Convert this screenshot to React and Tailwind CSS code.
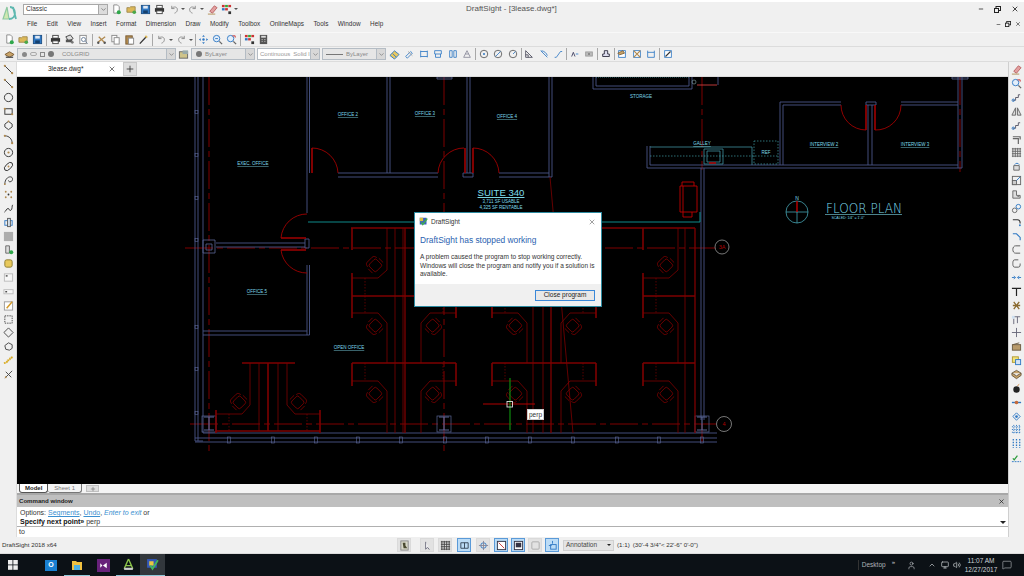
import { Minus, X, Plus, ChevronDown, ChevronUp, User, Monitor, Volume2, MessageSquare } from "lucide-react"

const LIB = "font-['Liberation_Sans',Arial,sans-serif]"

// small toolbar drawings, all on a 12x12 grid
const B = "#2f78c4", D = "#444", T = "#b08a50", Y = "#dcb858", G = "#8a8a8a"
const ICONS = {
  new: <><path d="M3 1h4l2 2v7H3z" fill="#fff" stroke={G} /><circle cx="8.5" cy="9" r="2.2" fill="#2fa84a" /></>,
  open: <><path d="M1 4h3l1-1h5v6H1z" fill={Y} stroke="#a08a50" /><circle cx="9" cy="9" r="2" fill="#4aa84a" /></>,
  save: <><rect x="1.5" y="1.5" width="9" height="9" fill={B} stroke="#1d4f85" /><rect x="3.5" y="2" width="5" height="3" fill="#dfe9f5" /><rect x="3.5" y="7" width="5" height="3" fill="#16406e" /></>,
  print: <><rect x="3" y="1.5" width="6" height="3" fill="#fff" stroke={D} /><rect x="1" y="4.5" width="10" height="4" fill="#333" /><rect x="3" y="7.5" width="6" height="3" fill="#fff" stroke={D} /></>,
  print2: <><path d="M2 3l5-2 3 4-5 3z" fill="#ddd" stroke={D} /><path d="M2 6h7v3H2z" fill="#555" /><circle cx="9" cy="9" r="1.5" fill="#777" /></>,
  preview: <><rect x="2" y="1.5" width="7" height="9" fill="#fff" stroke={G} /><circle cx="6" cy="6" r="2.2" fill="none" stroke="#6a7f9a" /><path d="M8 8l2.5 2.5" stroke="#6a7f9a" /></>,
  undo: <path d="M3 2v3h3M3 5c2-3 7-2 6 2-.3 1.5-1.5 2.5-3 3" fill="none" stroke={G} />,
  redo: <path d="M9 2v3H6M9 5C7 2 2 3 3 7c.3 1.5 1.5 2.5 3 3" fill="none" stroke={G} />,
  cut: <><path d="M2 9l8-6M3 3l6 6" stroke={T} strokeWidth="1.4" /><circle cx="2.5" cy="9.5" r="1.3" fill="#555" /><circle cx="9.5" cy="9.5" r="1.3" fill="#555" /></>,
  copy: <><rect x="2" y="1.5" width="5.5" height="7" fill="#fff" stroke={G} /><rect x="4.5" y="4" width="5.5" height="7" fill="#fff" stroke={G} /></>,
  paste: <><rect x="2" y="2" width="7" height="9" fill={T} stroke="#7a5a30" /><rect x="5" y="4.5" width="5.5" height="6.5" fill="#fff" stroke={G} /></>,
  match: <><path d="M2 10.5L9 3" stroke="#333" strokeWidth="1.4" /><path d="M8 2l2 2" stroke={Y} strokeWidth="2" /></>,
  pan: <><circle cx="6" cy="6" r="1.3" fill={B} /><path d="M6 1l1.5 2h-3zM6 11l1.5-2h-3zM1 6l2-1.5v3zM11 6L9 4.5v3z" fill={B} /></>,
  zoomA: <><circle cx="5" cy="5" r="3.5" fill="#e3eefa" stroke={B} /><path d="M8 8l3 3" stroke="#666" strokeWidth="1.4" /><path d="M3.5 5h3" stroke={B} /></>,
  zoomB: <><circle cx="5" cy="5" r="3.5" fill="#e3eefa" stroke={B} /><path d="M8 8l3 3" stroke="#666" strokeWidth="1.4" /><path d="M7 2h3v2" fill="none" stroke="#c33" /></>,
  layers: <><rect x="1" y="1" width="3" height="2.5" fill="#c33" /><rect x="4.5" y="1" width="3" height="2.5" fill="#3a3" /><rect x="8" y="1" width="3" height="2.5" fill="#c33" /><rect x="1" y="4.5" width="3" height="2.5" fill={B} /><rect x="4.5" y="4.5" width="3" height="2.5" fill="#c33" /><rect x="8" y="8" width="3" height="3" fill="#333" /></>,
  calc: <><rect x="2" y="1" width="8" height="10" fill="#555" /><rect x="3.5" y="2" width="5" height="2" fill="#ddd" /><path d="M4 6h1M7 6h1M4 8h1M7 8h1" stroke="#ddd" /></>,
  eraser: <><path d="M3 8l5-6 3 2-5 6z" fill="#e2a0a0" stroke="#b66" /><path d="M1 11h8" stroke="#b08a50" /></>,
  stack: <><path d="M1 6l5-3 5 3-5 3z" fill="#c9a46a" stroke="#7a5a30" /><path d="M2 9h8" stroke="#555" strokeWidth="1.5" /></>,
  folderL: <><rect x="1.5" y="3" width="9" height="7" fill="#cfc48a" stroke="#666" /><rect x="5" y="1.5" width="6" height="4" fill="#9aa" /></>,
  ruler: <><path d="M1 7l5-5 5 4-5 5z" fill="#e8c860" stroke={B} /><path d="M4 5l4 4" stroke={B} /></>,
  aligned: <><path d="M2 9l6-6 2 2-6 6z" fill="none" stroke={B} /><path d="M5 3l5 5" stroke="#999" /></>,
  dimH: <path d="M2 2v8M10 2v8M2 9h8M2 3h8" fill="none" stroke={B} />,
  dimB: <><path d="M2 2h8v4H2zM3 6v4h6V6" fill="none" stroke={B} /></>,
  dimV: <><path d="M2 2h3v8H2zM7 2h3v8H7z" fill="none" stroke={B} /></>,
  dimA: <path d="M2 10L6 2l4 8zM4 6h4" fill="none" stroke="#889" />,
  center: <><circle cx="6" cy="6" r="4.5" fill="none" stroke="#555" /><circle cx="6" cy="6" r="1.2" fill={B} /></>,
  dia: <><circle cx="6" cy="6" r="4.5" fill="none" stroke="#555" /><path d="M3 9l6-6" stroke={B} /></>,
  rad: <><circle cx="6" cy="6" r="4.5" fill="none" stroke="#555" /><path d="M6 6l3-3" stroke={B} /></>,
  corner: <path d="M2 2v8h8zM2 7h3v3" fill="none" stroke="#445" />,
  curve: <path d="M2 2l8 8M3 2c4 1 6 3 7 6" fill="none" stroke={B} />,
  leader: <path d="M2 10h2l5-7h2" fill="none" stroke={B} />,
  text: <><path d="M2 9l2-5 2 5" fill="none" stroke="#335" /><path d="M7 6h3" stroke={B} /></>,
  grayRect: <><rect x="2" y="3.5" width="8" height="5" fill="#bbb" stroke="#999" /><rect x="5" y="5" width="2" height="2" fill="#777" /></>,
  stamp: <><path d="M4 2h4v4h2v3H2V6h2z" fill="#dde" stroke="#223" /></>,
  tanbox: <><rect x="2" y="2" width="8" height="8" fill="#fff" stroke={B} /><path d="M1 5l6-3 2 3-6 2z" fill="#c9a46a" stroke="#7a5a30" /></>,
  tanx: <><rect x="2" y="2" width="8" height="8" fill="#fff" stroke={B} /><path d="M2 2l8 8M10 2l-8 8" stroke="#b08a50" strokeWidth="1.5" /></>,
  boxB: <path d="M2 2v8h8V2M2 4h8" fill="none" stroke={B} />,
  pencil: <><rect x="2" y="2" width="8" height="8" fill="#fff" stroke={B} /><path d="M3 9l6-6" stroke="#333" strokeWidth="1.3" /></>,
  seg: <><path d="M2 2l8 8" stroke="#333" /><circle cx="2" cy="2" r="1.2" fill={T} /><circle cx="10" cy="10" r="1.2" fill={T} /></>,
  circle: <circle cx="6" cy="6" r="4.5" fill="none" stroke="#333" />,
  rect: <><rect x="2" y="3" width="8" height="6" fill="none" stroke="#333" /><circle cx="2" cy="3" r="1.2" fill={T} /><circle cx="10" cy="9" r="1.2" fill={T} /></>,
  poly: <><path d="M6 1.5l4 3v3l-4 3-4-3v-3z" fill="none" stroke="#333" /><circle cx="6" cy="1.5" r="1" fill={T} /></>,
  arc: <><path d="M2 2c5 0 8 4 8 8" fill="none" stroke="#333" /><circle cx="2" cy="2" r="1.2" fill={T} /><circle cx="10" cy="10" r="1.2" fill={T} /></>,
  circleDot: <><circle cx="6" cy="6" r="4.5" fill="none" stroke="#333" /><circle cx="6" cy="6" r="1.2" fill={T} /></>,
  ellipse: <><ellipse cx="6" cy="6" rx="5.5" ry="3" transform="rotate(-45 6 6)" fill="none" stroke="#333" /><circle cx="6" cy="6" r="1" fill={T} /></>,
  ellArc: <><path d="M2 10c0-5 3-8 6-8s3 4 1 5-3 0-3-1" fill="none" stroke="#333" /><circle cx="2" cy="10" r="1" fill={T} /></>,
  dots: <><circle cx="3" cy="3" r="1" fill={T} /><circle cx="9" cy="3" r="1" fill={T} /><circle cx="6" cy="6" r="1" fill="#333" /><circle cx="3" cy="9" r="1" fill={T} /><circle cx="9" cy="9" r="1" fill={T} /></>,
  spline: <path d="M1.5 10c2-1 2-4 4-4s1 3 3 2 1-5 2-6" fill="none" stroke="#333" />,
  block: <><rect x="2" y="4" width="8" height="5" fill="none" stroke={B} /><rect x="5" y="1.5" width="3" height="9" fill="#d8e4f0" stroke="#555" /></>,
  hatch: <rect x="1" y="1" width="10" height="10" fill="#adadad" />,
  table: <><path d="M3 2h4v8H3z" fill="#ddd" stroke="#666" /><circle cx="9" cy="9" r="2.2" fill="#2fa84a" /></>,
  region: <rect x="2" y="2" width="8" height="8" rx="2" fill="#e8c95c" stroke="#8a7a30" />,
  note: <><rect x="1.5" y="2" width="9" height="8" fill="#f7f7f7" stroke="#bbb" /><rect x="3" y="3.5" width="2" height="1.5" fill="#444" /></>,
  noteS: <><rect x="1" y="4" width="10" height="4.5" fill="#f7f7f7" stroke="#bbb" /><rect x="2.5" y="5.5" width="2" height="1.5" fill="#444" /></>,
  edit: <><rect x="1.5" y="2" width="9" height="9" fill="#fff" stroke="#999" /><path d="M4 9l6-7" stroke="#d49a2a" strokeWidth="1.6" /></>,
  dashRect: <rect x="2" y="2" width="8" height="8" fill="none" stroke="#444" strokeDasharray="1.5 1" />,
  hex: <path d="M6 1l5 5-5 5-5-5z" fill="none" stroke="#444" />,
  cloud: <path d="M2 5l4-3 4 2v4l-3 2-4-1z" fill="none" stroke="#444" />,
  flash: <path d="M1 9l3-1 1-2 2-.5 1-2L11 2" fill="none" stroke="#d8aa20" strokeWidth="2" strokeDasharray="2 .6" />,
  trim: <><path d="M2 10l8-8M3 3l6 6" stroke="#444" /><circle cx="3" cy="9" r="1" fill={T} /></>,
  moveR: <><path d="M2 9h3V6h3V3h2" fill="none" stroke="#556" /><circle cx="2.5" cy="9" r="1.3" fill="none" stroke={B} /></>,
  mirror: <path d="M5 2v8H1zM7 2v8h4z" fill="#ddd" stroke="#666" />,
  offset: <path d="M2 3h8v3M2 5h6v6" fill="none" stroke="#666" strokeWidth="1.3" />,
  array: <><path d="M1 2h10M1 4.7h10M1 7.3h10M1 10h10M2 1v10M4.7 1v10M7.3 1v10M10 1v10" stroke="#666" /></>,
  rotate: <><path d="M3 5h6v5H3z" fill="#ddd" stroke="#666" /><path d="M4 4c1-2 4-2 5 0" fill="none" stroke={B} /></>,
  scale: <><rect x="1.5" y="1.5" width="9" height="9" fill="none" stroke="#666" /><rect x="1.5" y="6" width="4.5" height="4.5" fill="#ccc" stroke="#666" /><path d="M6 6l4-4" stroke={B} /></>,
  stretch: <path d="M2 2h4v5h4v3H2zM7 8h2" fill="#ddd" stroke="#666" />,
  cluster: <><circle cx="4" cy="8" r="2.5" fill="none" stroke="#666" /><circle cx="8" cy="4" r="2.5" fill="none" stroke={B} /></>,
  fillet: <><path d="M2 3h5c2 0 3 2 3 4" fill="none" stroke="#333" strokeWidth="1.2" /><circle cx="9.7" cy="9" r="1" fill={B} /></>,
  chamfer: <><path d="M2 3h4l4 4v3" fill="none" stroke={B} strokeWidth="1.2" /></>,
  capL: <path d="M10 2H5C3 2 2 4 2 6s1 4 3 4h5" fill="none" stroke="#555" />,
  capR: <path d="M8 2H4C2 2 2 5 2 6s0 4 2 4h4c2 0 2-2 2-4" fill="none" stroke="#555" />,
  join: <path d="M1 6h3M8 6h3M3 4.5L5 6 3 7.5M9 4.5L7 6l2 1.5" fill="none" stroke={B} />,
  tee: <path d="M1 2.5h10M6 2.5V11" stroke="#222" strokeWidth="1.3" />,
  explode: <path d="M3 2l6 8M9 2l-6 8M2 6h8" stroke="#8a6a30" strokeWidth="1.4" />,
  indent: <><path d="M3 3h7M7 3v7M3 5v6" stroke="#667" /><path d="M1 2h3v3H1z" fill="#cfe0f0" /></>,
  cross: <path d="M6 1v10M1 6h10" stroke="#667" />,
  crate: <><rect x="1.5" y="4" width="9" height="6" fill="#b89a6a" stroke="#6a5a40" /><path d="M2 4l7-2" stroke="#6a5a40" /></>,
  sheet: <><rect x="1.5" y="2" width="6.5" height="6" fill="#f2e27a" stroke="#b09a30" /><rect x="5" y="5" width="5.5" height="5.5" fill="#d4e4f5" stroke={B} /></>,
  box3: <path d="M6 1.5l5 3-5 3-5-3zM1 4.5V7l5 3.5L11 7V4.5" fill="#c9a46a" stroke="#6a5a40" />,
  bomb: <><circle cx="6" cy="7" r="3.5" fill="#222" /><path d="M7 3l2-1.5" stroke="#d08030" /></>,
  star: <><path d="M1 6h10" stroke={B} strokeWidth="1.5" /><circle cx="6" cy="6" r="2" fill="#c66a3a" /></>,
  net: <><path d="M6 2l4 4-4 4-4-4z" fill="none" stroke={B} /><circle cx="6" cy="6" r="1.5" fill={B} /></>,
  grid2: <path d="M3 1v10M6 1v10M9 1v10M1 3h10M1 6h10M1 9h10" stroke={B} strokeDasharray="1.3 1.3" />,
  grid3: <path d="M2.5 1v10M6 1v10M9.5 1v10" stroke={B} strokeWidth="1.4" strokeDasharray="1.7 1.3" />,
  checks: <><path d="M2 7l1.5 1.5L7 4" fill="none" stroke="#2a9a3a" strokeWidth="1.3" /><path d="M1 10.5h10" stroke={B} strokeDasharray="2 1" /></>,
  bulb: <><rect x="2" y="1" width="8" height="10" fill="#d8d8c8" stroke="#888" /><path d="M4 3h3v3l2 3H5z" fill="#4a4a30" /></>,
  cursor: <path d="M4 2v8l2-2 2 2.5" fill="#fff" stroke="#667" />,
  gridS: <path d="M2 1v10M4.7 1v10M7.3 1v10M10 1v10M1 2h10M1 4.7h10M1 7.3h10M1 10h10" stroke="#444" />,
  orth: <><path d="M2 3h8v6H2z" fill="none" stroke="#345" /><path d="M6 3v6" stroke="#345" /></>,
  snap: <><circle cx="6" cy="6" r="3" fill="none" stroke={B} /><path d="M6 1v10M1 6h10" stroke="#889" /></>,
  polar: <><rect x="1.5" y="1.5" width="9" height="9" fill="#fff" stroke="#334" /><path d="M3 3l6 6" stroke="#c33" /></>,
  lw: <><rect x="1.5" y="1.5" width="9" height="9" fill="#fff" stroke="#334" /><rect x="3" y="3" width="6" height="5" fill="#334" /></>,
  blank: <rect x="2" y="2" width="8" height="8" rx="1" fill="none" stroke="#aaa" />,
  dyn: <><path d="M6 1v3M2 6h3" stroke={B} /><rect x="4" y="5" width="6" height="5" fill="none" stroke={B} /></>,
}

function Tool({ k, w = "w-[14px]", s = 11 }) {
  return (
    <div className={"flex items-center justify-center shrink-0 " + w}>
      <svg width={s} height={s} viewBox="0 0 12 12">{ICONS[k]}</svg>
    </div>
  )
}

function Arrow({ w = "w-[6px]" }) {
  return <div className={"flex justify-center shrink-0 " + w}><div className="border-x-[2px] border-t-[2px] border-x-transparent border-t-[#555]" /></div>
}

function Sep({ w = "w-[4px]" }) {
  return <div className={"flex justify-center shrink-0 " + w}><div className="w-px h-[12px] bg-[#a8a8a8]" /></div>
}

function Combo({ w, children, dim }) {
  return (
    <div className={"flex items-center h-[12px] shrink-0 border border-[#b4bcc4] " + w + " " + (dim ? "bg-[#e6e6e6]" : "bg-white")}>
      <div className="flex-1 flex items-center min-w-0 px-[2px] gap-[3px] text-[6px] text-[#666] whitespace-nowrap">{children}</div>
      <div className="w-[9px] h-full flex items-center justify-center bg-[#d8d8d8] border-l border-[#b4bcc4]">
        <ChevronDown size={7} strokeWidth={2} color="#666" />
      </div>
    </div>
  )
}

const MENUS = ["File", "Edit", "View", "Insert", "Format", "Dimension", "Draw", "Modify", "Toolbox", "OnlineMaps", "Tools", "Window", "Help"]
const LEFT_TOOLS = ["seg", "seg", "circle", "rect", "poly", "arc", "circleDot", "ellipse", "ellArc", "dots", "spline", "block", "hatch", "table", "region", "note", "noteS", "edit", "dashRect", "hex", "cloud", "flash", "trim"]
const RIGHT_TOOLS = ["zoomB", "moveR", "mirror", "moveR", "offset", "array", "rotate", "scale", "stretch", "cluster", "fillet", "chamfer", "capL", "capR", "join", "tee", "explode", "indent", "cross", "crate", "sheet", "box3", "bomb", "star", "net", "grid2", "grid3", "checks"]
const DIM_TOOLS = ["aligned", "dimH", "dimB", "dimV", "dimA", "|", "center", "dia", "rad", "|", "corner", "curve", "leader", "|", "text", "grayRect", "|", "stamp", "|", "tanbox", "tanx", "boxB", "|", "pencil"]

const RED = "#7d0000"

function Chair({ x, y, r }) {
  return (
    <g transform={`translate(${x} ${y}) rotate(${r})`} fill="none" stroke={RED} strokeWidth=".8">
      <rect x="-4.5" y="-5" width="10" height="10" rx="2" />
      <path d="M-4 -6.5c-2 .5-3.500 1-3.500 3v7c0 2 1.500 2.500 3.500 3" />
      <path d="M-2 -7.500h6M-2 7.500h6" />
    </g>
  )
}

// one line of cubicles, running right (dir 1) or left (dir -1) from the thick panel
function Cubes({ x, dir }) {
  const X = v => x + dir * v
  const thin = `M${X(35)} 228V270L${X(26)} 278H${x}M${x} 313H${X(26)}L${X(35)} 323V363M${x} 381H${X(26)}L${X(35)} 391V433`
  const thick = `M${x} 228V250M${x} 273V318M${x} 363V386`
  const dash = `M${X(13)} 278V296M${X(13)} 296V313M${X(13)} 363V381`
  const up = dir === 1 ? 45 : 135
  const down = dir === 1 ? -45 : -135
  return (
    <g>
      <path d={thin} fill="none" stroke={RED} strokeWidth=".8" />
      <path d={thick} fill="none" stroke={RED} strokeWidth="1.6" />
      <path d={dash} fill="none" stroke={RED} strokeWidth=".7" strokeDasharray="1.500 1.500" />
      <Chair x={X(23)} y={265} r={up} />
      <Chair x={X(23)} y={326} r={down} />
      <Chair x={X(23)} y={394} r={down} />
    </g>
  )
}

function IBeam({ x, y }) {
  return (
    <g fill="none" stroke="#5a6696">
      <path d={`M${x - 5} ${y - 7}h10M${x - 5} ${y + 6}h10M${x} ${y - 7}v13`} strokeWidth="1.2" />
      <rect x={x - 7} y={y - 8} width="14" height="16" strokeWidth=".7" />
    </g>
  )
}

function Label({ x, y, children, size = 4.5, under = true }) {
  return (
    <text x={x} y={y} textAnchor="middle" fontSize={size} fill="#7fdcec" className={LIB + (under ? " underline" : "")}>{children}</text>
  )
}

function Plan() {
  const ticksX = [229, 273, 316, 358, 401, 445, 487, 530, 573, 617, 659, 702]
  const ticksY = [112, 155, 198, 240, 327, 369, 413]
  return (
    <svg width="991" height="407" viewBox="17 77 991 407" className="block">
      {/* center lines */}
      <path d="M209 77V453M444 77V453M185 248H716M190 424H716M702 77V170M702 424V442M960 77V172" fill="none" stroke="#8c0000" strokeWidth=".9" strokeDasharray="28 4 6 4" />

      {/* walls */}
      <path d="M195 77V441H203M198 77V441M203 77V433
        M307 77V213M309.5 77V173M307 265V335M309.5 265V335M203 331H307M203 335H309.5
        M387 77V173M390 77V173M467 77V173M470 77V173M549 77V177M552 77V177
        M338 173H438M338 177H438M499 173H549M499 177H552M463 173H473V177H463Z
        M216 243H305M216 247H305M305 239H309V248H305Z
        M203 433H717M195 438H717M195 442H717
        M701 168V420M704 168V420
        M647 146V168H962M650 146V165H958M958 77V168M962 77V168
        M780 165V102H841M783 165V105H841M868 105V165M872 105V165M866 102H876V105H866Z
        M901 102H958M901 105H958
        M593 77V89H692V77M596 77V86H689V77M718 77V85"
        fill="none" stroke="#4a5688" strokeWidth=".9" />
      <path d="M203 240H215V253H203ZM206 244H212V250H206Z" fill="none" stroke="#5a6696" strokeWidth=".8" />
      <path d="M437 77H452V79H437ZM952 77H968V79H952Z" fill="none" stroke="#5a6696" strokeWidth=".8" />
      {ticksX.map(x => <rect key={x} x={x - 1.5} y="437" width="3" height="6" fill="none" stroke="#5a6696" strokeWidth=".6" />)}
      {ticksY.map(y => <rect key={y} x="195" y={y - 1.5} width="3" height="3" fill="none" stroke="#5a6696" strokeWidth=".6" />)}
      <IBeam x={209} y={424} />
      <IBeam x={444} y={424} />
      <IBeam x={702} y={424} />

      {/* doors */}
      <path d="M312 148A26 26 0 0 1 338 173M438 173A26 26 0 0 1 464 148M473 148A26 26 0 0 1 499 173
        M307 214A26 26 0 0 0 281 238M281 250A26 26 0 0 0 307 273
        M841 105A25 25 0 0 0 866 130M875 130A25 25 0 0 0 901 105" fill="none" stroke="#a00000" strokeWidth=".9" />
      <path d="M312 148V173M465 148V173M473 148V173M281 238H306M281 250H306M866 105V130M875 105V130" fill="none" stroke="#a00000" strokeWidth="1.6" />

      {/* cubicles */}
      <path d="M351 228H695M352 296H456M352 363H456M492 296H596M492 363H596M643 296H695M643 363H695M242 363H295M216 431H320" fill="none" stroke={RED} strokeWidth="1.6" />
      <path d="M395 228V433M533 228V433M543 228V433M685 228V433M550 177L573 433M403 228V433" fill="none" stroke={RED} strokeWidth=".8" />
      <path d="M405 228V433M551 228V433M695 228V433" fill="none" stroke={RED} strokeWidth="1.3" />
      <Cubes x={352} dir={1} />
      <Cubes x={456} dir={-1} />
      <Cubes x={492} dir={1} />
      <Cubes x={596} dir={-1} />
      <Cubes x={643} dir={1} />

      {/* lower left cubicles */}
      <path d="M250 363V405L242 414H216M287 363V405L295 414H320M259 363V431M278 363V431" fill="none" stroke={RED} strokeWidth=".8" />
      <path d="M268 363V431M216 410V433M320 410V433" fill="none" stroke={RED} strokeWidth="1.6" />
      <path d="M229 414V431M307 414V431" fill="none" stroke={RED} strokeWidth=".7" strokeDasharray="1.5 1.5" />
      <Chair x={239} y={402} r={45} />
      <Chair x={298} y={402} r={135} />

      {/* galley */}
      <path d="M650 147H752V165M704 149H723V164H704ZM707 151H720V162H707Z" fill="none" stroke="#3f8f9f" strokeWidth=".8" />
      <path d="M650 156H778M754 141H778V164H754Z" fill="none" stroke="#3f9fa8" strokeWidth=".7" strokeDasharray="1.5 1.5" />
      <path d="M709 163H716" stroke="#c00000" strokeWidth="1.4" />
      <path d="M596 77H689" stroke="#3f9fa8" strokeWidth=".8" strokeDasharray="1 1" />
      <path d="M697 85H717" stroke="#d04040" strokeWidth=".9" />
      <circle cx="694" cy="82" r="2" fill="none" stroke="#8aa" strokeWidth=".6" />

      {/* chair by the corner */}
      <path d="M680 186H697V212H680ZM683 186V212M682 186V182H694V186M683 212V217H692V212" fill="none" stroke="#c00000" strokeWidth=".9" />

      {/* teal run */}
      <path d="M308 222H700V212" fill="none" stroke="#119a9a" strokeWidth=".9" />

      {/* grid bubbles */}
      <circle cx="722" cy="247" r="7" fill="#000" stroke="#aaa" strokeWidth=".7" />
      <text x="722" y="249" textAnchor="middle" fontSize="5.5" fill="#b00000" className={LIB}>3A</text>
      <circle cx="724" cy="424" r="7.5" fill="#000" stroke="#aaa" strokeWidth=".7" />
      <text x="724" y="426" textAnchor="middle" fontSize="5.5" fill="#b00000" className={LIB}>4</text>

      {/* north arrow and title */}
      <circle cx="797" cy="212" r="11" fill="none" stroke="#4fb8c8" strokeWidth=".7" />
      <path d="M786 212H808M797 212V223" stroke="#4fb8c8" strokeWidth=".7" />
      <path d="M797 201V212" stroke="#e00000" strokeWidth="1.2" />
      <Label x={797} y={200} size={5} under={false}>N</Label>
      <text x="826" y="213" fontSize="13.5" fill="#7fdcec" textLength="76" lengthAdjust="spacingAndGlyphs" className="font-['DejaVu_Sans',sans-serif] font-extralight">FLOOR PLAN</text>
      <path d="M825 214.5H902" stroke="#7fdcec" strokeWidth=".6" />
      <Label x={848} y={219} size={3.5} under={false}>SCALED: 1/4" = 1'-0"</Label>

      {/* room labels */}
      <Label x={348} y={116}>OFFICE 2</Label>
      <Label x={425} y={115}>OFFICE 3</Label>
      <Label x={507} y={118}>OFFICE 4</Label>
      <Label x={253} y={165}>EXEC. OFFICE</Label>
      <Label x={257} y={293}>OFFICE 5</Label>
      <Label x={349} y={349}>OPEN OFFICE</Label>
      <Label x={641} y={98} under={false}>STORAGE</Label>
      <Label x={702} y={145}>GALLEY</Label>
      <Label x={766} y={154} under={false}>REF</Label>
      <Label x={824} y={146}>INTERVIEW 2</Label>
      <Label x={915} y={146}>INTERVIEW 3</Label>
      <Label x={501} y={196} size={9.6}>SUITE 340</Label>
      <Label x={501} y={203} size={4.5} under={false}>3,711 SF USABLE</Label>
      <Label x={501} y={209} size={4.5} under={false}>4,325 SF RENTABLE</Label>

      {/* cursor */}
      <path d="M483 404H535" stroke="#b00000" />
      <path d="M510 378V430" stroke="#0e8a0e" strokeWidth="1.2" />
      <rect x="507" y="401.5" width="5.5" height="5.5" fill="none" stroke="#ddd" strokeWidth=".9" />
    </svg>
  )
}

function CrashDialog() {
  return (
    <div className={"absolute left-[397px] top-[135px] w-[188px] h-[95px] flex flex-col bg-white border border-[#2c8aa0] text-[#222] " + LIB}>
      <div className="flex items-center h-[15px] pl-[4px] pr-[5px] gap-[3px] mt-[1px]">
        <svg width="9" height="9" viewBox="0 0 12 12"><rect x="1" y="1" width="9" height="9" fill="#3a5fc0" /><rect x="1" y="1" width="4.5" height="4.5" fill="#d8c040" /><path d="M3 7l2 3 6-8" fill="none" stroke="#3fae4f" strokeWidth="1.8" /></svg>
        <span className="text-[6.5px] text-[#333]">DraftSight</span>
        <X size={8} strokeWidth={1.4} className="ml-auto" color="#333" />
      </div>
      <div className="pl-[5px] mt-[5px] text-[8.4px] leading-[12px] text-[#2a5fb0]">DraftSight has stopped working</div>
      <div className="pl-[5px] pr-[6px] mt-[7px] text-[6.5px] leading-[8.5px] text-[#333]">
        A problem caused the program to stop working correctly. Windows will close the program and notify you if a solution is available.
      </div>
      <div className="mt-auto h-[22px] bg-[#f0f0f0] flex items-center justify-end pr-[6px]">
        <div className="w-[60px] h-[11px] flex items-center justify-center bg-[#e8e8e8] border border-[#3a88d8] text-[6.5px] text-[#222]">Close program</div>
      </div>
    </div>
  )
}

function Taskbar() {
  return (
    <div className={"h-[22px] flex items-stretch bg-[#0c1116] text-[#cfd3d6] " + LIB}>
      <div className="w-[26px] flex items-center justify-center">
        <svg width="10" height="10" viewBox="0 0 10 10" fill="#eee"><rect width="4.5" height="4.5" /><rect x="5.3" width="4.5" height="4.5" /><rect y="5.3" width="4.5" height="4.5" /><rect x="5.3" y="5.3" width="4.5" height="4.5" /></svg>
      </div>
      <div className="w-[12px]" />
      <div className="w-[26px] flex items-center justify-center">
        <div className="w-[12px] h-[11px] bg-[#1a7fd0] text-white text-[7px] font-bold flex items-center justify-center">O</div>
      </div>
      <div className="w-[26px] flex items-center justify-center border-b border-[#8fc8d8]">
        <svg width="12" height="12" viewBox="0 0 12 12"><path d="M1 2h4l1 1h5v8H1z" fill="#f0c040" /><rect x="3" y="6" width="6" height="5" fill="#4fb0e0" /></svg>
      </div>
      <div className="w-[26px] flex items-center justify-center">
        <svg width="13" height="13" viewBox="0 0 12 12"><rect width="12" height="12" fill="#68217a" /><path d="M3 4l2 2-2 2zM9 3.5v5L5.5 6z" fill="#fff" /></svg>
      </div>
      <div className="w-[24px] flex items-center justify-center border-b border-[#8fc8d8]">
        <svg width="13" height="13" viewBox="0 0 12 12"><path d="M6 1L2 10M6 1l4 9M3 7h6" stroke="#8bc34a" strokeWidth="1.3" fill="none" /><rect x="2" y="9" width="8" height="2" fill="#ccc" /></svg>
      </div>
      <div className="w-[25px] flex items-center justify-center bg-[#32373c] border-b border-[#8fc8d8]">
        <svg width="13" height="13" viewBox="0 0 12 12"><rect x="1" y="1" width="9" height="8" fill="#3458b8" /><rect x="3" y="3" width="4" height="4" fill="#e8c840" /><path d="M4 7l2 3 5-8" fill="none" stroke="#42b85a" strokeWidth="1.6" /></svg>
      </div>
      <div className="flex-1" />
      <div className="flex items-center">
        <div className="w-px h-[10px] bg-[#333] mr-[3px]" />
        <span className="text-[6.5px] text-[#aeb2b6]">Desktop</span>
        <span className="text-[6px] ml-[6px] -mt-[6px]">»</span>
        <User size={9} className="ml-[12px]" strokeWidth={1.5} />
        <ChevronUp size={8} className="ml-[12px]" />
        <Monitor size={8} className="ml-[5px]" />
        <Volume2 size={8} className="ml-[4px]" />
        <div className="w-[36px] ml-[2px] flex flex-col items-center text-[6.5px] leading-[9px]">
          <span>11:07 AM</span>
          <span>12/27/2017</span>
        </div>
        <MessageSquare size={10} className="ml-[3px]" strokeWidth={1.3} />
        <div className="w-[12px]" />
      </div>
    </div>
  )
}

function StatusIcon({ k, on }) {
  return (
    <div className={"w-[14px] h-[14px] flex items-center justify-center shrink-0 border " + (on ? "bg-[#bcdcf6] border-[#5a9ad8]" : "bg-[#e2e2e2] border-[#dadada]")}>
      <svg width="11" height="11" viewBox="0 0 12 12">{ICONS[k]}</svg>
    </div>
  )
}

export default function App() {
  return (
    <div className={"relative w-[1024px] h-[576px] flex flex-col overflow-hidden bg-[#f0f0f0] text-[#222] " + LIB}>
      {/* title bar with quick access */}
      <div className="h-[16px] flex items-center relative border-t-2 border-white shrink-0">
        <svg width="16" height="18" viewBox="0 0 16 18" className="absolute left-[2px] top-[2px]">
          <path d="M1 15L5 3l2 12z" fill="#cfe8b0" stroke="#8cc8a0" strokeWidth="1.2" />
          <path d="M7 15c4 0 6-3 6-6s-2-6-5-6M11 3l3 12" fill="none" stroke="#5fb8b0" strokeWidth="1.8" />
        </svg>
        <div className="w-[23px] shrink-0" />
        <div className="flex items-center h-[11px] w-[85px] bg-white border border-[#a8a8a8] shrink-0">
          <span className="flex-1 px-[2px] text-[6.5px] text-[#333]">Classic</span>
          <div className="w-[9px] h-full bg-[#dcdcdc] border-l border-[#a8a8a8] flex items-center justify-center"><ChevronDown size={7} color="#555" /></div>
        </div>
        <Tool k="new" w="w-[15px] ml-[1px]" />
        <Tool k="open" />
        <Tool k="save" />
        <Tool k="print" w="w-[15px]" />
        <Tool k="undo" />
        <Arrow w="w-[4px]" />
        <Tool k="redo" />
        <Arrow w="w-[6px]" />
        <Tool k="eraser" />
        <Tool k="layers" />
        <Arrow />
        <div className="absolute left-[466px] text-[8px] text-[#555] whitespace-nowrap">DraftSight - [3lease.dwg*]</div>
        <div className="ml-auto flex items-center text-[#222] pr-[5px] gap-[10px]">
          <Minus size={6} strokeWidth={3} />
          <svg width="7" height="7" viewBox="0 0 7 7" fill="none" stroke="#222"><rect x="2" y=".5" width="4.5" height="4" /><rect x=".5" y="2.5" width="4" height="4" fill="#f0f0f0" /></svg>
          <X size={8} strokeWidth={2.5} />
        </div>
      </div>

      {/* menu */}
      <div className="h-[16px] flex items-center shrink-0 pl-[27px] gap-[9.5px] text-[6.4px] text-[#333] relative">
        {MENUS.map(m => <span key={m}>{m}</span>)}
        <div className="ml-auto flex items-center pr-[3px] gap-[4px]">
          <Minus size={5} strokeWidth={3} />
          <svg width="6" height="6" viewBox="0 0 7 7" fill="none" stroke="#222"><rect x="2" y=".5" width="4.5" height="4" /><rect x=".5" y="2.5" width="4" height="4" fill="#f0f0f0" /></svg>
          <X size={6} strokeWidth={2.5} />
        </div>
      </div>

      {/* standard toolbar */}
      <div className="h-[14px] flex items-center shrink-0 pl-[2px] border-t border-[#f8f8f8]">
        <Tool k="new" /><Tool k="open" /><Tool k="save" />
        <Sep />
        <Tool k="print" /><Tool k="print2" /><Tool k="preview" />
        <Sep />
        <Tool k="cut" /><Tool k="copy" /><Tool k="paste" /><Tool k="match" />
        <Sep />
        <Tool k="undo" /><Arrow /><Tool k="redo" /><Arrow />
        <Sep w="w-[2px]" />
        <Tool k="pan" /><Tool k="zoomA" /><Tool k="zoomB" />
        <Sep />
        <Tool k="layers" /><Tool k="calc" w="w-[15px]" />
      </div>

      {/* layer and dimension toolbar */}
      <div className="h-[16px] flex items-center shrink-0 pl-[1px] border-y border-[#dcdcdc]">
        <Tool k="stack" w="w-[16px]" />
        <Combo w="w-[159px]" dim>
          <span className="w-[5px] h-[5px] rounded-full bg-[#888] ml-[2px]" />
          <span className="w-[7px] h-[4px] rounded-full border border-[#aaa]" />
          <span className="w-[5px] h-[5px] border border-[#888]" />
          <span className="w-[6px] h-[6px] rounded-full bg-[#777]" />
          <span className="ml-[5px] text-[#888]">COLGRID</span>
        </Combo>
        <Tool k="folderL" w="w-[15px]" />
        <Combo w="w-[64px]" dim><span className="w-[6px] h-[6px] rounded-full bg-[#777] ml-[2px]" /><span className="text-[#888]">ByLayer</span></Combo>
        <Combo w="w-[63px] ml-[2px]"><span className="text-[#999]">Continuous</span><span className="text-[#999]">Solid l</span></Combo>
        <Combo w="w-[64px] ml-[2px]" dim><span className="w-[17px] h-px bg-[#777] ml-[1px]" /><span className="text-[#888]">ByLayer</span></Combo>
        <Tool k="ruler" w="w-[15px] ml-[1px]" />
        {DIM_TOOLS.map((k, i) => k === "|" ? <Sep key={i} w="w-[2px]" /> : <Tool key={i} k={k} w="w-[14.5px]" s={10} />)}
      </div>

      {/* workspace */}
      <div className="h-[475px] flex shrink-0">
        <div className="w-[17px] shrink-0 flex flex-col pt-[1px] border-r border-[#dcdcdc]">
          {LEFT_TOOLS.map((k, i) => <Tool key={i} k={k} w="w-[16px] h-[13.85px]" />)}
        </div>

        <div className="flex-1 min-w-0 flex flex-col">
          <div className="h-[15px] flex items-stretch shrink-0 border-b border-[#dcdcdc]">
            <div className="w-[106px] bg-white flex items-center relative">
              <span className="ml-[31px] text-[6.5px] text-[#222]">3lease.dwg*</span>
              <X size={8} strokeWidth={2} className="absolute right-[7px]" color="#333" />
            </div>
            <div className="w-[14px] bg-[#dedede] border border-[#c8c8c8] flex items-center justify-center">
              <Plus size={10} strokeWidth={2} color="#333" />
            </div>
          </div>

          <div className="h-[407px] relative bg-black shrink-0">
            <Plan />
            <CrashDialog />
            <div className="absolute left-[510px] top-[332px] w-[17px] h-[11px] bg-white border border-[#ccc] flex items-center justify-center text-[6.5px] text-[#333]">perp</div>
          </div>

          {/* sheet tabs */}
          <div className="h-[9px] flex items-center shrink-0 bg-[#f4f4f4] text-[6px] pl-[2px]">
            <span className="h-full px-[5px] font-bold flex items-center bg-white border-b border-x border-[#555] rounded-b-[3px] text-[#222]">Model</span>
            <span className="h-full px-[6px] flex items-center text-[#777] border-b border-r border-[#777] rounded-b-[3px]">Sheet 1</span>
            <span className="ml-[4px] w-[13px] h-[7px] bg-[#dedede] border border-[#c0c0c0] flex items-center justify-center"><Plus size={6} color="#555" /></span>
          </div>

          {/* command window */}
          <div className="flex-1 flex flex-col border-t-2 border-[#a8a8a8]">
            <div className="h-[12px] shrink-0 bg-[#bfbfbf] flex items-center justify-between pl-[2px] pr-[3px] text-[6.1px] font-bold text-[#222]">
              <span>Command window</span>
              <X size={7} strokeWidth={2.5} />
            </div>
            <div className="h-[20px] shrink-0 bg-white border-b border-[#b0b0b0] flex">
              <div className="flex-1 pl-[3px] pt-[1px] text-[7px] leading-[9px]">
                <div className="text-[#333]">Options: <span className="text-[#3a8fd0] underline">Segments</span>, <span className="text-[#3a8fd0] underline">Undo</span>, <em className="text-[#3a8fd0]">Enter to exit</em> or</div>
                <div><b className="text-[#111]">Specify next point»</b> <span className="text-[#333]">perp</span></div>
              </div>
              <div className="w-[11px] flex items-end justify-center pb-[2px]">
                <div className="border-x-[3px] border-t-[3px] border-x-transparent border-t-[#222]" />
              </div>
            </div>
            <div className="flex-1 bg-white pl-[2px] text-[7px] leading-[9px] text-[#333]">to</div>
          </div>
        </div>

        <div className="w-[16px] shrink-0 flex flex-col pt-[1px] border-l border-[#cfcfcf]">
          <Tool k="eraser" w="w-[15px] h-[13.85px]" />
          {RIGHT_TOOLS.map((k, i) => <Tool key={i} k={k} w="w-[15px] h-[13.85px]" />)}
        </div>
      </div>

      {/* status bar */}
      <div className="h-[17px] flex items-center shrink-0 relative text-[6.2px] text-[#333] pl-[2px] border-b border-[#dcdcdc]">
        <span className="w-[395px] shrink-0">DraftSight 2018 x64</span>
        <StatusIcon k="bulb" />
        <div className="w-[9px]" />
        <StatusIcon k="cursor" />
        <div className="w-[4px]" />
        <StatusIcon k="gridS" />
        <div className="w-[5px]" />
        <StatusIcon k="orth" on />
        <div className="w-[5px]" />
        <StatusIcon k="snap" />
        <div className="w-[4px]" />
        <StatusIcon k="polar" on />
        <div className="w-[3px]" />
        <StatusIcon k="lw" on />
        <div className="w-[3px]" />
        <StatusIcon k="blank" />
        <div className="w-[3px]" />
        <StatusIcon k="dyn" on />
        <div className="ml-[4px] w-[51px] h-[11px] bg-[#e4e4e4] border border-[#d0d0d0] flex items-center justify-between px-[2px] text-[6.5px] text-[#444]">
          Annotation
          <div className="border-x-[2px] border-t-[2px] border-x-transparent border-t-[#222]" />
        </div>
        <span className="ml-[3px]">(1:1)</span>
        <span className="ml-[3px] whitespace-nowrap">(30'-4 3/4"&lt; 22'-6" 0'-0")</span>
      </div>

      <Taskbar />
    </div>
  )
}
